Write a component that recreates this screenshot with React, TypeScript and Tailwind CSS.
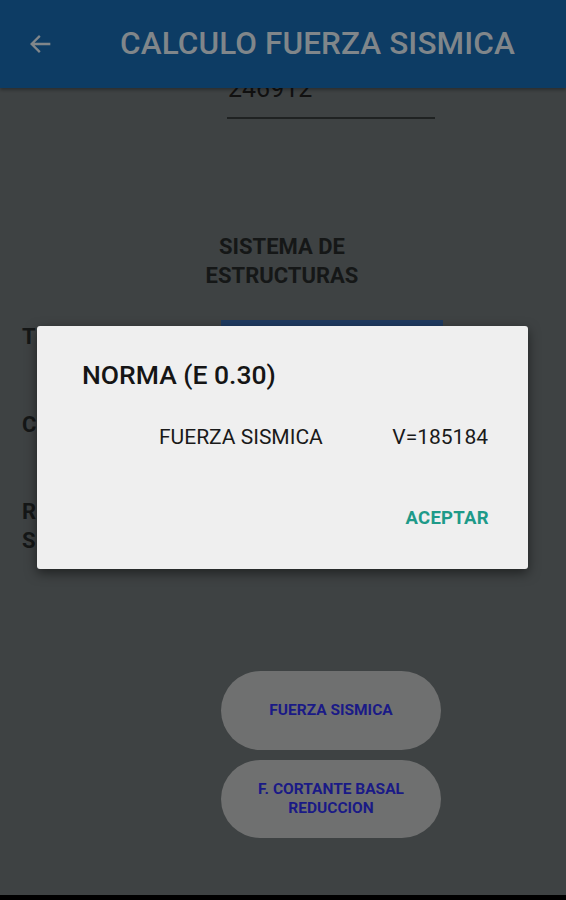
import React from 'react';

const font = { fontFamily: 'Roboto, "Noto Sans", sans-serif' };

const App: React.FC = () => {
  return (
    <div className="relative flex h-[900px] w-[566px] flex-col overflow-hidden bg-[#3e4243]" style={font}>
      {/* toolbar */}
      <header className="z-10 flex h-[88px] shrink-0 items-center bg-[#0d3c64] shadow-[0_2px_3px_rgba(0,0,0,0.3)]">
        <svg className="ml-[27px] h-[28px] w-[28px]" viewBox="0 0 24 24" fill="none" stroke="#80868a" strokeWidth="2">
          <path d="M20 12H4M11 5l-7 7 7 7" />
        </svg>
        <h1 className="ml-[65px] text-[31.5px] font-medium tracking-[0.1px] text-[#80868a]">CALCULO FUERZA SISMICA</h1>
      </header>

      {/* scrolled form, dimmed */}
      <main className="relative flex-1 overflow-hidden">
        <div className="-mt-[11px] flex flex-col">
          <div className="ml-[227px] w-[208px] border-b-2 border-[#1f2222] pb-[16px] pl-[1px] text-[25px] leading-[24px] text-[#111]">
            246912
          </div>
          <div className="mt-[113px] ml-[200px] w-[164px] text-center text-[22px] font-bold leading-[29px] text-[#151717]">
            SISTEMA DE ESTRUCTURAS
          </div>
          <div className="mt-[30px] ml-[221px] h-[6px] w-[222px] bg-[#1e3a60]" />
          <div className="ml-[22px] flex flex-col text-[22px] font-bold leading-[29px] text-[#151717]">
            <span className="-mt-[4px]">T</span>
            <span className="mt-[59px]">C</span>
            <span className="mt-[58px]">R</span>
            <span>S</span>
          </div>
          <div className="mt-[116px] ml-[221px] flex w-[220px] flex-col gap-[10px]">
            <button className="flex h-[79px] items-center justify-center rounded-full bg-[#6f7070] text-[15.5px] font-bold text-[#1a1a86]">
              FUERZA SISMICA
            </button>
            <button className="flex h-[78px] flex-col items-center justify-center rounded-full bg-[#6f7070] text-[15.5px] font-bold leading-[19px] text-[#1a1a86]">
              <span>F. CORTANTE BASAL</span>
              <span>REDUCCION</span>
            </button>
          </div>
        </div>
      </main>
      <div className="h-[5px] shrink-0 bg-black" />

      {/* dialog */}
      <div className="absolute left-[37px] top-[326px] flex h-[243px] w-[491px] flex-col rounded-[3px] bg-[#efefef] shadow-[0_4px_12px_rgba(0,0,0,0.5)]">
        <h2 className="ml-[45px] mt-[32px] text-[26.5px] font-medium leading-[34px] text-[#151515]">NORMA (E 0.30)</h2>
        <div className="mt-[32px] flex items-center pr-[40px] text-[21px] leading-[26px] text-[#1a1a1a]">
          <span className="ml-[122px]">FUERZA SISMICA</span>
          <span className="ml-auto">V=185184</span>
        </div>
        <div className="mt-[56px] flex justify-end pr-[39px]">
          <span className="text-[18.5px] font-bold leading-[24px] tracking-[0.3px] text-[#1e9a89]">ACEPTAR</span>
        </div>
      </div>
    </div>
  );
};

export default App;
